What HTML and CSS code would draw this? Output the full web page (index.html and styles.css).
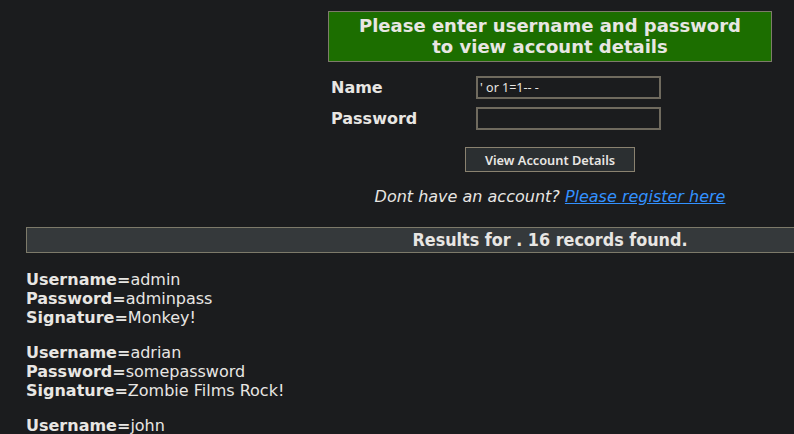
FILE: index.html
```html
<!DOCTYPE html>
<html>
<head>
<meta charset="utf-8">
<link rel="stylesheet" href="styles.css">
</head>
<body>
<div class="page">
  <form class="login">
    <div class="banner">Please enter username and password<br>to view account details</div>
    <div class="row">
      <span class="label">Name</span>
      <input class="field" type="text" value="' or 1=1-- -">
    </div>
    <div class="row">
      <span class="label">Password</span>
      <input class="field" type="password" value="">
    </div>
    <div class="actions">
      <button class="btn" type="button">View Account Details</button>
    </div>
  </form>
  <div class="register"><em>Dont have an account? <a href="#">Please register here</a></em></div>
  <div class="results-bar">Results for . 16 records found.</div>
  <div class="records">
    <p class="record"><b>Username=</b>admin<br><b>Password=</b>adminpass<br><b>Signature=</b>Monkey!</p>
    <p class="record"><b>Username=</b>adrian<br><b>Password=</b>somepassword<br><b>Signature=</b>Zombie Films Rock!</p>
    <p class="record"><b>Username=</b>john</p>
  </div>
</div>
</body>
</html>
```

FILE: styles.css
```css
html, body {
  margin: 0;
  padding: 0;
  background: #1b1c1e;
  overflow: hidden;
}
body {
  color: #e8e6e3;
  font-family: "DejaVu Sans", sans-serif;
  font-size: 16px;
}
.page {
  width: 1048px;
  margin-left: 26px;
  padding-top: 11px;
  display: flex;
  flex-direction: column;
  align-items: center;
}
.login {
  width: 444px;
  margin: 0;
  display: flex;
  flex-direction: column;
}
.banner {
  background: #1c6e00;
  border: 1px solid #7d7a6a;
  text-align: center;
  font-weight: bold;
  font-size: 18px;
  line-height: 21px;
  padding: 3px 0 4px;
}
.row {
  display: flex;
  align-items: center;
  height: 31px;
}
.banner + .row { margin-top: 10px; }
.label {
  width: 148px;
  padding-left: 3px;
  box-sizing: border-box;
  font-weight: bold;
  font-size: 16px;
}
.field {
  width: 185px;
  height: 23px;
  box-sizing: border-box;
  margin: 0;
  background: #1b1c1e;
  border: 2px solid #6f6a5e;
  color: #e8e6e3;
  font-family: "Noto Sans", sans-serif;
  font-size: 12.5px;
  padding: 0 2px;
  outline: none;
}
.actions {
  display: flex;
  justify-content: center;
  margin-top: 13px;
}
.btn {
  width: 170px;
  height: 25px;
  margin: 0;
  background: #2b2f31;
  border: 1px solid #8a8270;
  color: #e8e6e3;
  font-family: "Noto Sans", sans-serif;
  font-size: 12.8px;
  font-weight: 600;
  padding: 0;
}
.register {
  margin-top: 15px;
  font-size: 16px;
  line-height: 19px;
}
.register a {
  color: #3391ff;
}
.results-bar {
  align-self: stretch;
  margin-top: 21px;
  height: 26px;
  box-sizing: border-box;
  background: #35393b;
  border: 1px solid #7d7a6a;
  text-align: center;
  font-family: "DejaVu Sans Condensed", "DejaVu Sans", sans-serif;
  font-stretch: condensed;
  font-weight: bold;
  font-size: 17.8px;
  line-height: 24px;
}
.records {
  align-self: stretch;
  margin-top: 17px;
}
.record {
  margin: 0 0 16px;
  line-height: 19px;
}
```
